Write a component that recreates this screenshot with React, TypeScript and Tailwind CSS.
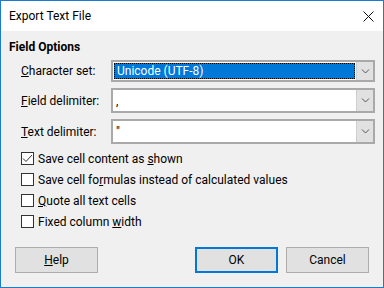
import React from 'react'

const font = { fontFamily: 'Roboto, "Noto Sans", sans-serif' }

function Chevron() {
  return (
    <svg width="9" height="5" viewBox="0 0 9 5" className="block">
      <path d="M1 0.5 L4.5 4 L8 0.5" fill="none" stroke="#555" strokeWidth="1" />
    </svg>
  )
}

function Combo({ value, selected, h }: { value: string; selected?: boolean; h: string }) {
  return (
    <div className={`flex w-[264px] ${h} border-2 border-[#a9a9a9] bg-white`}>
      <div className="flex-1 p-px">
        {selected ? (
          <div className="h-full bg-[#0078d7] border border-dotted border-white outline outline-1 outline-dotted outline-black -outline-offset-1 flex items-center pl-[2px] text-white">
            {value}
          </div>
        ) : (
          <div className="h-full flex items-center pl-[2px]">{value}</div>
        )}
      </div>
      <div className="w-[17px] bg-[#e1e1e1] border-l border-[#cfcfcf] flex items-center justify-center">
        <Chevron />
      </div>
    </div>
  )
}

function Check({ checked, children }: { checked?: boolean; children: React.ReactNode }) {
  return (
    <div className="flex items-center h-[13px]">
      <div className="w-[13px] h-[13px] border border-[#333] bg-white flex items-center justify-center">
        {checked && (
          <svg width="11" height="11" viewBox="0 0 11 11">
            <path d="M1 5.5 L4 8.5 L10 2" fill="none" stroke="#333" strokeWidth="1" />
          </svg>
        )}
      </div>
      <span className="ml-[4px] leading-none">{children}</span>
    </div>
  )
}

export default function App() {
  return (
    <div
      style={font}
      className="w-[384px] h-[288px] border border-[#1a7bd1] bg-[#f0f0f0] text-[12px] text-black flex flex-col"
    >
      <div className="h-[30px] bg-white flex items-center justify-between pl-[8px] pr-[8px]">
        <span>Export Text File</span>
        <svg width="11" height="11" viewBox="0 0 11 11" className="mr-[1px]">
          <path d="M0.5 0.5 L10.5 10.5 M10.5 0.5 L0.5 10.5" stroke="#111" strokeWidth="1" />
        </svg>
      </div>

      <div className="flex-1 flex flex-col pl-[8px]">
        <div className="font-bold mt-[8px] leading-[16px]">Field Options</div>

        <div className="flex items-center mt-[5px]">
          <span className="w-[102px] pl-[12px]">
            <u>C</u>haracter set:
          </span>
          <Combo value="Unicode (UTF-8)" selected h="h-[22px]" />
        </div>
        <div className="flex items-center mt-[6px]">
          <span className="w-[102px] pl-[12px]">
            <u>F</u>ield delimiter:
          </span>
          <Combo value="," h="h-[25px]" />
        </div>
        <div className="flex items-center mt-[6px]">
          <span className="w-[102px] pl-[12px]">
            <u>T</u>ext delimiter:
          </span>
          <Combo value={'"'} h="h-[25px]" />
        </div>

        <div className="flex flex-col gap-[8px] pl-[12px] mt-[8px]">
          <Check checked>
            Save cell content as <u>s</u>hown
          </Check>
          <Check>
            Save cell fo<u>r</u>mulas instead of calculated values
          </Check>
          <Check>
            <u>Q</u>uote all text cells
          </Check>
          <Check>
            Fixed column <u>w</u>idth
          </Check>
        </div>

        <div className="flex mt-[19px] pl-[6px]">
          <button className="w-[83px] h-[26px] bg-[#e1e1e1] border border-[#adadad]">
            <u>H</u>elp
          </button>
          <button className="w-[83px] h-[26px] bg-[#e1e1e1] border-2 border-[#0078d7] ml-[97px]">
            OK
          </button>
          <button className="w-[83px] h-[26px] bg-[#e1e1e1] border border-[#adadad] ml-[8px]">
            Cancel
          </button>
        </div>
      </div>
    </div>
  )
}
